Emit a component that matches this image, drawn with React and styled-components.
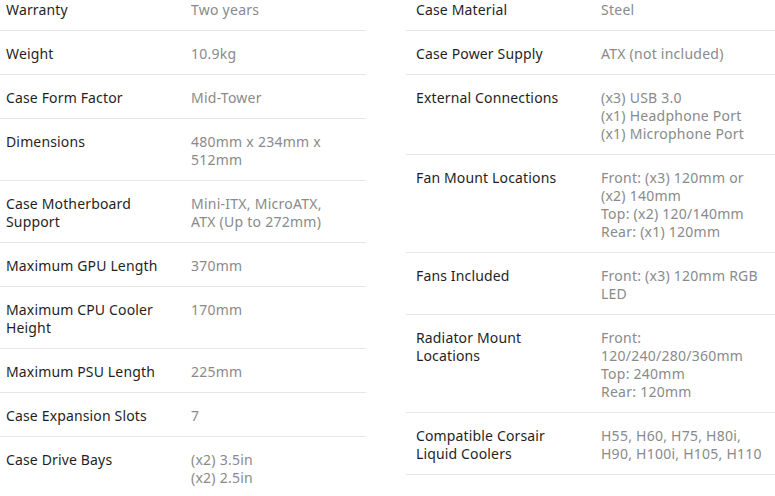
import React from "react";
import styled, { createGlobalStyle } from "styled-components";

const GlobalStyle = createGlobalStyle`
  html, body { margin: 0; padding: 0; background: #ffffff; overflow: hidden; }
  body { font-family: "Noto Sans", "Open Sans", sans-serif; }
`;

const Page = styled.div`
  display: grid;
  grid-template-columns: 370px 370px;
  column-gap: 40px;
  align-items: start;
  margin: -13px 0 0 -4px;
`;

const Table = styled.div`
  display: flex;
  flex-direction: column;
`;

const Row = styled.div`
  display: grid;
  grid-template-columns: 195px 1fr;
  border-bottom: 1px solid #e6e6e6;
  padding: 14px 0 11px;
  font-size: 14px;
  line-height: 18px;
  letter-spacing: 0.15px;
`;

const Label = styled.div`
  padding: 0 20px 0 10px;
  color: #1f1f1f;
`;

const Value = styled.div`
  padding: 0;
  color: #8a8a8a;
  letter-spacing: 0.25px;
`;

const Line = styled.span`
  display: block;
  white-space: nowrap;
`;

const left = [
  ["Warranty", ["Two years"]],
  ["Weight", ["10.9kg"]],
  ["Case Form Factor", ["Mid-Tower"]],
  ["Dimensions", ["480mm x 234mm x", "512mm"]],
  ["Case Motherboard Support", ["Mini-ITX, MicroATX,", "ATX (Up to 272mm)"]],
  ["Maximum GPU Length", ["370mm"]],
  ["Maximum CPU Cooler Height", ["170mm"]],
  ["Maximum PSU Length", ["225mm"]],
  ["Case Expansion Slots", ["7"]],
  ["Case Drive Bays", ["(x2) 3.5in", "(x2) 2.5in"]],
];

const right = [
  ["Case Material", ["Steel"]],
  ["Case Power Supply", ["ATX (not included)"]],
  ["External Connections", ["(x3) USB 3.0", "(x1) Headphone Port", "(x1) Microphone Port"]],
  ["Fan Mount Locations", ["Front: (x3) 120mm or", "(x2) 140mm", "Top: (x2) 120/140mm", "Rear: (x1) 120mm"]],
  ["Fans Included", ["Front: (x3) 120mm RGB", "LED"]],
  ["Radiator Mount Locations", ["Front:", "120/240/280/360mm", "Top: 240mm", "Rear: 120mm"]],
  ["Compatible Corsair Liquid Coolers", ["H55, H60, H75, H80i,", "H90, H100i, H105, H110"]],
];

function SpecTable({ rows }) {
  return (
    <Table>
      {rows.map(([label, lines]) => (
        <Row key={label}>
          <Label>{label}</Label>
          <Value>
            {lines.map((l) => (
              <Line key={l}>{l}</Line>
            ))}
          </Value>
        </Row>
      ))}
    </Table>
  );
}

export default function App() {
  return (
    <>
      <GlobalStyle />
      <Page>
        <SpecTable rows={left} />
        <SpecTable rows={right} />
      </Page>
    </>
  );
}
